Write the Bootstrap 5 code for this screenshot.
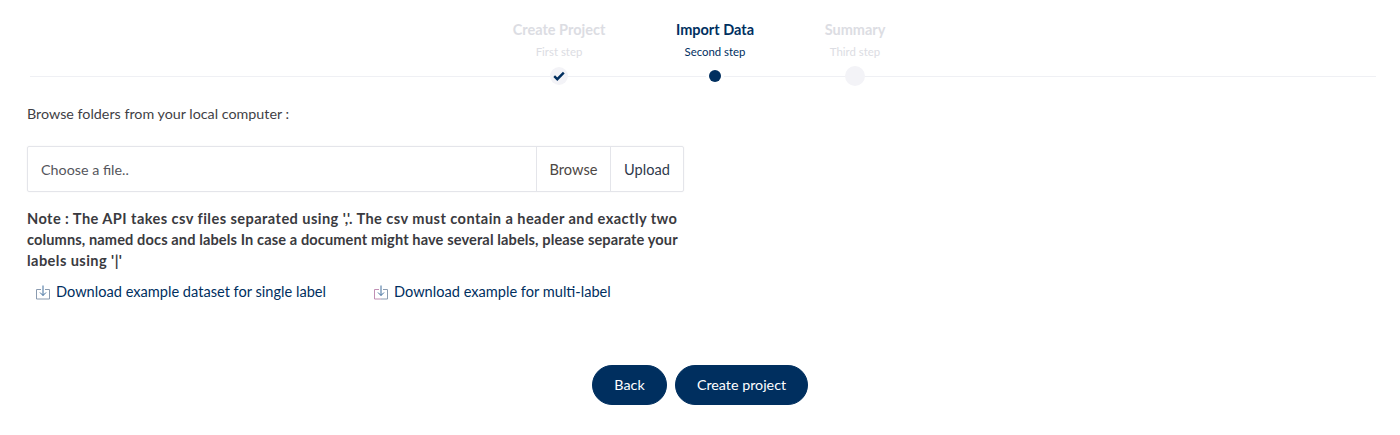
<!DOCTYPE html>
<html lang="en">

<head>
    <meta charset="UTF-8">
    <meta name="viewport" content="width=device-width, initial-scale=1.0">
    <title>Import Data</title>
    <link href="https://cdn.jsdelivr.net/npm/bootstrap@5.3.3/dist/css/bootstrap.min.css" rel="stylesheet">
    <script src="https://cdn.jsdelivr.net/npm/bootstrap@5.3.3/dist/js/bootstrap.bundle.min.js"></script>
    <style>
        body {
            font-family: "Lato", "Noto Sans", sans-serif;
            font-size: 14.3px;
            color: #3f3f46;
            background: #fff;
            height: 435px;
            overflow: hidden;
        }

        .wizard {
            height: 86px;
            padding-top: 20px;
            margin-left: 30px;
            margin-right: 24px;
        }

        .wizard-rule {
            top: 76px;
            left: 0;
            right: 0;
            height: 1px;
            background: #eff0f4;
        }

        .wizard-step {
            width: 130px;
            color: #dcdde3;
        }

        .wizard-step.active {
            color: #002f5f;
        }

        .step-one { margin-left: 464px; }
        .step-two { margin-left: 26px; }
        .step-three { margin-left: 10px; }

        .step-title {
            font-size: 14.5px;
            font-weight: 700;
            line-height: 20px;
        }

        .step-sub {
            font-size: 11.4px;
            line-height: 14px;
            margin-top: 5px;
        }

        .step-dot {
            width: 18px;
            height: 18px;
            margin: 8px auto 0;
            background: #f3f3f7;
            border-radius: 50%;
            position: relative;
            z-index: 1;
        }

        .step-dot.current {
            background: #fff;
        }

        .step-dot.current::after {
            content: "";
            width: 12px;
            height: 12px;
            background: #002f5f;
            border-radius: 50%;
        }

        .step-dot.pending {
            width: 20px;
            height: 20px;
            margin-top: 7px;
        }

        .import-pane {
            padding-left: 27px;
            width: 684px;
        }

        .browse-label {
            margin-top: 19px;
            line-height: 18px;
        }

        .file-box {
            height: 46px;
            margin-top: 23px;
            border: 1px solid #e4e5ea;
            border-radius: 2px;
            box-shadow: 0 0 2px rgba(0, 0, 0, .05);
        }

        .file-name {
            padding-left: 13px;
            padding-top: 1px;
            color: #55565c;
        }

        .file-action {
            border-left: 1px solid #e4e5ea;
        }

        .file-browse { width: 74px; color: #4d4744; font-size: 14.6px; padding-top: 1px; }
        .file-upload { width: 73px; color: #2f3a4d; font-size: 14.6px; padding-top: 2px; }

        .format-note {
            margin-top: 16px;
            font-size: 14.6px;
            font-weight: 700;
            letter-spacing: .43px;
            line-height: 21px;
            color: #3a3a40;
        }

        .note-tight {
            letter-spacing: .11px;
        }

        .sample-links {
            margin-top: 11px;
            padding-left: 8px;
        }

        .sample-link {
            color: #002f5f;
            font-size: 14.6px;
            text-decoration: none;
            line-height: 20px;
        }

        .sample-link svg {
            margin-right: 5px;
        }

        .link-single { width: 338px; }

        .wizard-actions {
            margin-top: 63px;
            gap: 8px;
        }

        .pill-btn {
            height: 40px;
            border-radius: 20px;
            background: #002f5f;
            border-color: #002f5f;
            color: #fff;
            font-size: 14.3px;
        }

        .pill-back { width: 75px; }
        .pill-create { width: 133px; }
    </style>
</head>

<body>
    <div class="wizard position-relative d-flex">
        <div class="wizard-rule position-absolute"></div>
        <div class="wizard-step step-one text-center">
            <div class="step-title">Create Project</div>
            <div class="step-sub">First step</div>
            <div class="step-dot d-flex align-items-center justify-content-center">
                <svg width="12" height="10" viewBox="0 0 12 10">
                    <path d="M1.2 5.2 4.3 8.2 10.8 1.6" fill="none" stroke="#002f5f" stroke-width="2.4" />
                </svg>
            </div>
        </div>
        <div class="wizard-step step-two active text-center">
            <div class="step-title">Import Data</div>
            <div class="step-sub">Second step</div>
            <div class="step-dot current d-flex align-items-center justify-content-center"></div>
        </div>
        <div class="wizard-step step-three text-center">
            <div class="step-title">Summary</div>
            <div class="step-sub">Third step</div>
            <div class="step-dot pending"></div>
        </div>
    </div>

    <div class="import-pane">
        <div class="browse-label">Browse folders from your local computer :</div>

        <div class="file-box d-flex">
            <div class="file-name flex-grow-1 d-flex align-items-center">Choose a file..</div>
            <div class="file-action file-browse d-flex align-items-center justify-content-center">Browse</div>
            <div class="file-action file-upload d-flex align-items-center justify-content-center">Upload</div>
        </div>

        <div class="format-note">Note : The API takes csv files separated using ','. The csv must contain a header and exactly two<br><span class="note-tight">columns, named docs and labels In case a document might have several labels, please separate your</span><br>labels using '|'</div>

        <div class="sample-links d-flex">
            <a href="#" class="sample-link link-single d-flex align-items-center">
                <svg width="16" height="15" viewBox="0 0 16 15" fill="none">
                    <path d="M6 4.500H1.500V14H14.500V4.500H10" stroke="#8a9bb0" />
                    <path d="M8 .5V10.500M5 7.500 8 10.500 11 7.500" stroke="#3f6d9c" />
                </svg>
                Download example dataset for single label
            </a>
            <a href="#" class="sample-link d-flex align-items-center">
                <svg width="16" height="15" viewBox="0 0 16 15" fill="none">
                    <path d="M6 4.500H1.500V14H8" stroke="#c08fb4" />
                    <path d="M8 14H14.500V4.500H10" stroke="#8a9bb0" />
                    <path d="M8 .5V10.500M5 7.500 8 10.500 11 7.500" stroke="#3f6d9c" />
                </svg>
                Download example for multi-label
            </a>
        </div>
    </div>

    <div class="wizard-actions d-flex justify-content-center">
        <button type="button" class="btn pill-btn pill-back">Back</button>
        <button type="button" class="btn pill-btn pill-create">Create project</button>
    </div>
</body>

</html>
